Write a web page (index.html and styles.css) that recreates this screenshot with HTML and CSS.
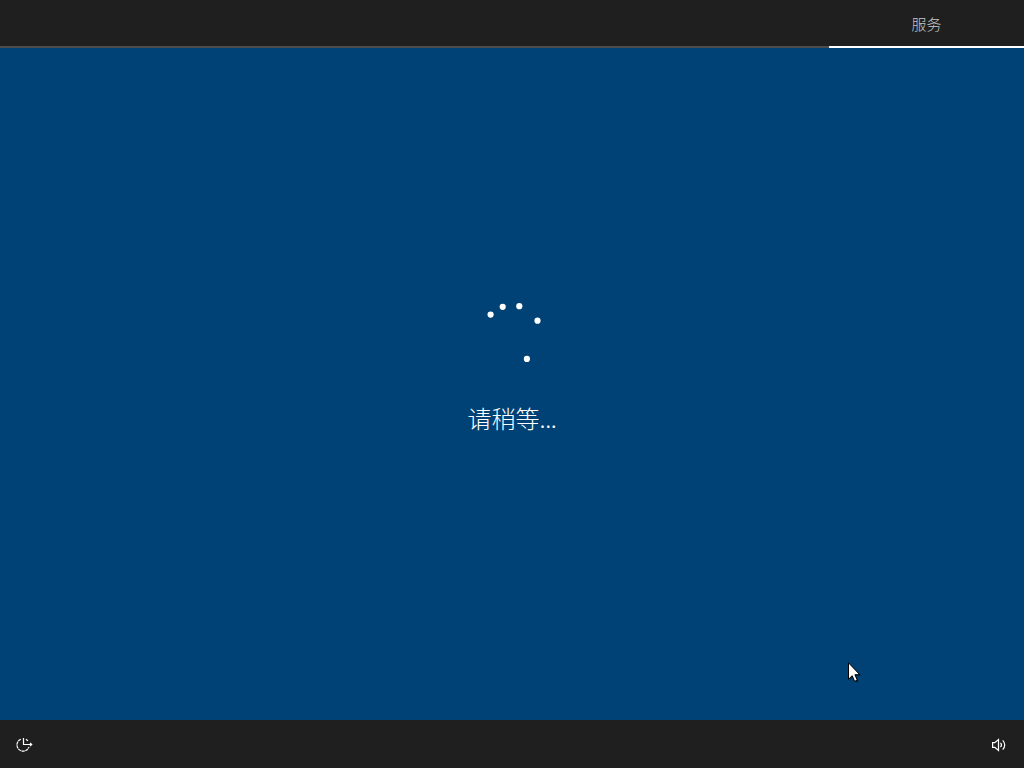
FILE: index.html
```html
<!DOCTYPE html>
<html lang="zh-CN">
<head>
<meta charset="utf-8">
<title>请稍等</title>
<link rel="stylesheet" href="styles.css">
</head>
<body>
<div class="screen">
  <header class="topbar">
    <div class="tab-rest"></div>
    <div class="tab">服务</div>
  </header>
  <main class="content">
    <svg class="spinner" width="60" height="60" viewBox="0 0 60 60" fill="#fff">
      <circle cx="8.6" cy="12.6" r="3.1"/>
      <circle cx="20.7" cy="4.8" r="3.1"/>
      <circle cx="37.3" cy="4.2" r="3.1"/>
      <circle cx="55.5" cy="18.7" r="3.1"/>
      <circle cx="44.9" cy="56.9" r="3.1"/>
    </svg>
    <p class="message">请稍等<span class="dots">...</span></p>
  </main>
  <footer class="bottombar">
    <svg class="icon" width="18" height="16" viewBox="0 0 18 16" fill="none" stroke="#fff" stroke-width="1.2">
      <path d="M8.5 1v6.5h8"/>
      <path d="M15 5.9l1.7 1.6-1.7 1.6"/>
      <path d="M5.8 2.2A6.2 6.2 0 1 0 14 10" stroke-dasharray="3.2 .6"/>
      <path d="M11 2.3l2 1.6"/>
    </svg>
    <svg class="icon" width="16" height="16" viewBox="0 0 16 16" fill="none" stroke="#fff" stroke-width="1.2">
      <path d="M1.6 5.7h2.2l3.7-3.2v11l-3.7-3.2H1.6z"/>
      <path d="M9.5 5.9c1.2 1.2 1.2 3 0 4.2M11.7 3.4c2.7 2.6 2.7 6.6 0 9.2"/>
    </svg>
  </footer>
  <svg class="cursor" width="16" height="22" viewBox="0 0 16 22">
    <path d="M2 2v16.5l3.7-3.4 2.5 5.8 2.8-1.2-2.5-5.6h5z" fill="#000" opacity=".3"/>
    <path d="M.5 .8v16.4l3.7-3.5 2.4 5.6 2.7-1.1-2.4-5.5h4.9z" fill="#fff" stroke="#000"/>
  </svg>
</div>
</body>
</html>
```

FILE: styles.css
```css
body {
  margin: 0;
  font-family: "Noto Sans CJK SC", sans-serif;
  color: #fff;
}

.screen {
  position: relative;
  display: flex;
  flex-direction: column;
  width: 1024px;
  height: 768px;
  overflow: hidden;
  background: #004275;
}

.topbar {
  display: flex;
  height: 48px;
  background: #1f1f1f;
}

.tab-rest {
  flex: 1;
  border-bottom: 2px solid #4c4c4c;
}

.tab {
  box-sizing: border-box;
  width: 195px;
  border-bottom: 2px solid #fff;
  color: #c8c8c8;
  font-size: 15px;
  font-weight: 300;
  line-height: 48px;
  text-align: center;
}

.content {
  display: flex;
  flex: 1;
  flex-direction: column;
  align-items: center;
  padding-top: 254px;
}

.message {
  margin: 38px 0 0;
  font-size: 24px;
  font-weight: 300;
  line-height: 36px;
}

.dots {
  letter-spacing: -0.4px;
}

.bottombar {
  display: flex;
  justify-content: space-between;
  align-items: center;
  box-sizing: border-box;
  height: 48px;
  padding: 2px 17px 0 15px;
  background: #1f1f1f;
}

.cursor {
  position: absolute;
  left: 848px;
  top: 662px;
}
```
